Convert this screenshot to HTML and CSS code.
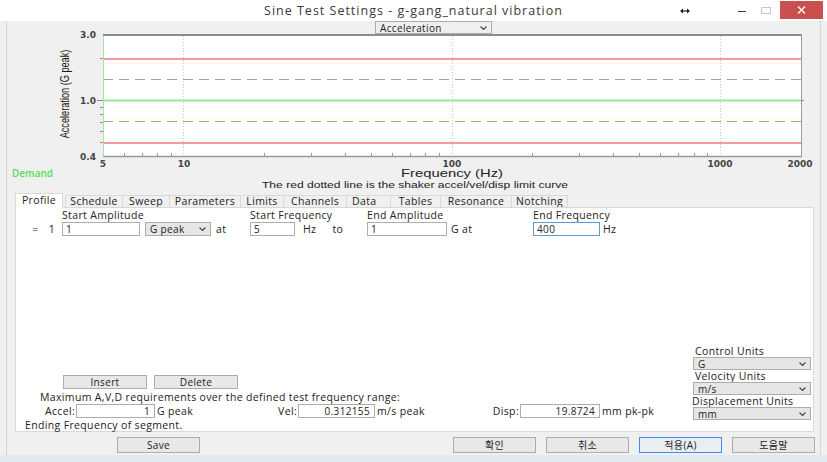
FILE: index.html
```html
<!DOCTYPE html>
<html lang="en">
<head>
<meta charset="utf-8">
<title>Sine Test Settings</title>
<link rel="stylesheet" href="styles.css">
</head>
<body>
<div class="titlebar">
  <div class="tb-side"></div>
  <div class="tb-title">Sine Test Settings - g-gang_natural vibration</div>
  <div class="tb-side tb-controls">
    <svg class="tb-resize" width="10" height="6" viewBox="0 0 10 6"><path d="M0 3 L3 0.5 V5.5 Z M10 3 L7 0.5 V5.5 Z" fill="#222"/><path d="M2 3H8" stroke="#222" stroke-width="1.2"/></svg>
    <span class="tb-min"></span>
    <span class="tb-max"></span>
    <span class="tb-close"><svg width="9" height="8" viewBox="0 0 9 8"><path d="M1 0.5 L8 7.5 M8 0.5 L1 7.5" stroke="#fff" stroke-width="1.4"/></svg></span>
  </div>
</div>

<div class="frame">
  <div class="chart-top">
    <div class="combo combo-accel"><span>Acceleration</span><svg width="7" height="4" viewBox="0 0 7 4"><path d="M0.5 0.5 L3.5 3.5 L6.5 0.5" fill="none" stroke="#444" stroke-width="1.1"/></svg></div>
  </div>
  <svg class="plot" width="813" height="156" viewBox="7 34 813 156">
    <rect x="103" y="34" width="698" height="122" fill="#fff"/>
    <line x1="103" y1="63.5" x2="801" y2="63.5" stroke="#fbfbe6"/>
    <line x1="103" y1="118.5" x2="801" y2="118.5" stroke="#fbfbe6"/>
    <line x1="103" y1="138.5" x2="801" y2="138.5" stroke="#eefbfb"/>
    <rect class="limit" x="103" y="58" width="698" height="2"/>
    <line x1="103" y1="79.5" x2="801" y2="79.5" stroke="#a6a68a" stroke-dasharray="10 6"/>
    <rect class="demand-line" x="103" y="99.5" width="698" height="2"/>
    <line x1="103" y1="121.5" x2="801" y2="121.5" stroke="#a6a68a" stroke-dasharray="10 6"/>
    <rect class="limit" x="103" y="142" width="698" height="2"/>
    <path d="M183.5 36V156M452.5 36V156M720.5 36V156" stroke="#c4c4c4" stroke-dasharray="1 2"/>
    <path d="M124.5 156v-3M142.5 156v-3M157.5 156v-3M171.5 156v-3M264.5 156v-3M311.5 156v-3M345.5 156v-3M371.5 156v-3M392.5 156v-3M410.5 156v-3M425.5 156v-3M439.5 156v-3M532.5 156v-3M579.5 156v-3M613.5 156v-3M639.5 156v-3M660.5 156v-3M678.5 156v-3M694.5 156v-3M707.5 156v-3" stroke="#999"/>
    <path d="M100 142.5h3M100 131.5h3M100 122.5h3M100 114.5h3M100 107.5h3M100 58.5h3M97 100.5h6M801 100.5h3" stroke="#888"/>
    <line x1="103" y1="35" x2="802" y2="35" stroke="#8e8e8e" stroke-width="2"/>
    <line x1="801.5" y1="34" x2="801.5" y2="157" stroke="#999"/>
    <line x1="103" y1="156.5" x2="802" y2="156.5" stroke="#999" stroke-width="1.4"/>
    <line x1="103.5" y1="36" x2="103.5" y2="156" stroke="#a9e2a9"/>
    <g class="axis-num">
      <text x="96" y="37.5" text-anchor="end">3.0</text>
      <text x="96" y="104" text-anchor="end">1.0</text>
      <text x="96" y="159.5" text-anchor="end">0.4</text>
      <text x="103" y="166.5" text-anchor="middle">5</text>
      <text x="184" y="166.5" text-anchor="middle">10</text>
      <text x="452" y="166.5" text-anchor="middle">100</text>
      <text x="720" y="166.5" text-anchor="middle">1000</text>
      <text x="800" y="166.5" text-anchor="middle">2000</text>
    </g>
    <text class="axis-title-y" transform="translate(69 94) rotate(-90) scale(0.68 1)" text-anchor="middle">Acceleration (G peak)</text>
    <text class="axis-title-x" x="401" y="177" textLength="102" lengthAdjust="spacingAndGlyphs">Frequency (Hz)</text>
    <text class="demand" x="12" y="176.5">Demand</text>
    <text class="subtitle" x="262" y="188" textLength="306" lengthAdjust="spacingAndGlyphs">The red dotted line is the shaker accel/vel/disp limit curve</text>
  </svg>

  <div class="tabs">
    <div class="tab tab-active">Profile</div>
    <div class="tab tab-schedule">Schedule</div>
    <div class="tab tab-sweep">Sweep</div>
    <div class="tab tab-parameters">Parameters</div>
    <div class="tab tab-limits">Limits</div>
    <div class="tab tab-channels">Channels</div>
    <div class="tab tab-data">Data</div>
    <div class="tab tab-tables">Tables</div>
    <div class="tab tab-resonance">Resonance</div>
    <div class="tab tab-notching">Notching</div>
  </div>

  <div class="panel">
    <div class="profile">
      <div></div>
      <div class="lbl">Start Amplitude</div>
      <div class="lbl">Start Frequency</div>
      <div class="lbl">End Amplitude</div>
      <div class="lbl">End Frequency</div>

      <div class="seg-no"><span class="eq">=</span>1</div>
      <div class="ctl">
        <div class="field in-amp">1</div>
        <div class="combo combo-gpeak"><span>G peak</span><svg width="7" height="4" viewBox="0 0 7 4"><path d="M0.5 0.5 L3.5 3.5 L6.5 0.5" fill="none" stroke="#444" stroke-width="1.1"/></svg></div>
        <span class="after-combo">at</span>
      </div>
      <div class="ctl">
        <div class="field in-sfreq">5</div>
        <span class="unit-hz">Hz</span>
        <span class="word-to">to</span>
      </div>
      <div class="ctl">
        <div class="field in-eamp">1</div>
        <span class="unit-gat">G at</span>
      </div>
      <div class="ctl">
        <div class="field in-efreq">400</div>
        <span class="unit-hz2">Hz</span>
      </div>
    </div>

    <div class="panel-bottom">
      <div class="pb-left">
        <div class="btn-row">
          <div class="btn btn-small">Insert</div>
          <div class="btn btn-small">Delete</div>
        </div>
        <div class="avd-title">Maximum A,V,D requirements over the defined test frequency range:</div>
        <div class="avd-row">
          <span class="avd-lbl">Accel:</span>
          <div class="field num">1</div>
          <span class="avd-unit">G peak</span>
          <span class="avd-lbl">Vel:</span>
          <div class="field num">0.312155</div>
          <span class="avd-unit">m/s peak</span>
          <span class="avd-lbl">Disp:</span>
          <div class="field num">19.8724</div>
          <span class="avd-unit">mm pk-pk</span>
        </div>
        <div class="status">Ending Frequency of segment.</div>
      </div>
      <div class="units">
        <div class="unit-lbl">Control Units</div>
        <div class="combo combo-unit"><span>G</span><svg width="7" height="4" viewBox="0 0 7 4"><path d="M0.5 0.5 L3.5 3.5 L6.5 0.5" fill="none" stroke="#444" stroke-width="1.1"/></svg></div>
        <div class="unit-lbl">Velocity Units</div>
        <div class="combo combo-unit"><span>m/s</span><svg width="7" height="4" viewBox="0 0 7 4"><path d="M0.5 0.5 L3.5 3.5 L6.5 0.5" fill="none" stroke="#444" stroke-width="1.1"/></svg></div>
        <div class="unit-lbl unit-lbl-wide">Displacement Units</div>
        <div class="combo combo-unit"><span>mm</span><svg width="7" height="4" viewBox="0 0 7 4"><path d="M0.5 0.5 L3.5 3.5 L6.5 0.5" fill="none" stroke="#444" stroke-width="1.1"/></svg></div>
      </div>
    </div>
  </div>

  <div class="footer">
    <div class="btn">Save</div>
    <div class="footer-right">
      <div class="btn">확인</div>
      <div class="btn">취소</div>
      <div class="btn btn-default">적용(A)</div>
      <div class="btn">도움말</div>
    </div>
  </div>
</div>
<div class="bottom-strip"></div>
</body>
</html>
```

FILE: styles.css
```css
* { box-sizing: border-box; margin: 0; padding: 0; }
html, body { width: 827px; height: 462px; overflow: hidden; }
body {
  background: #f0f0f0;
  font-family: "Open Sans", "Noto Sans CJK KR", sans-serif;
  font-size: 10.5px;
  letter-spacing: 0.35px;
  color: #222;
  display: flex;
  flex-direction: column;
}

/* title bar */
.titlebar {
  flex: none;
  height: 21px;
  background: #fff;
  display: grid;
  grid-template-columns: 1fr auto 1fr;
  align-items: center;
}
.tb-title { font-size: 12.5px; letter-spacing: 1px; color: #3a3a3a; line-height: 21px; white-space: nowrap; }
.tb-controls { display: flex; justify-content: flex-end; align-items: center; height: 21px; padding-right: 4px; }
.tb-resize { margin-right: 48px; }
.tb-min { width: 8px; height: 1px; background: #333; margin-right: 15px; margin-top: 2px; }
.tb-max { width: 10px; height: 7px; border: 1px solid #c8c8c8; margin-right: 9px; }
.tb-close {
  width: 43px; height: 18px; background: #c9504e;
  display: flex; align-items: center; justify-content: center;
  align-self: flex-start; margin-top: 1px;
}

/* window body */
.frame {
  flex: 1;
  margin: 0 6px;
  border-left: 1px solid #d4d4d4;
  border-right: 1px solid #d4d4d4;
  display: flex;
  flex-direction: column;
}
.chart-top { height: 13px; display: flex; }
.plot { display: block; flex: none; overflow: visible; letter-spacing: 0; }
.limit { fill: #f39a9a; }
.demand-line { fill: #9be89b; }
.axis-num { font-family: "DejaVu Sans", sans-serif; font-weight: bold; font-size: 9px; fill: #444; }
.axis-title-y { font-family: "Liberation Sans", sans-serif; font-size: 13.5px; fill: #1a1a1a; }
.axis-title-x { font-family: "Liberation Sans", sans-serif; font-size: 11.5px; fill: #222; }
.demand { font-family: "Open Sans", sans-serif; font-size: 10px; font-weight: 600; fill: #55dd55; }
.subtitle { font-family: "Liberation Sans", sans-serif; font-size: 9.5px; fill: #222; }

/* combos and fields */
.combo {
  display: flex; align-items: center; justify-content: space-between;
  height: 14px; border: 1px solid #acacac; background: #e6e6e6;
  padding: 0 4px; font-size: 10px; line-height: 12px; white-space: nowrap;
}
.combo-accel { margin-left: 368px; width: 117px; height: 13px; background: #efefef; }
.combo-gpeak { width: 66px; margin-left: 5px; }
.combo-unit { width: 118px; height: 13px; }
.field {
  height: 14px; border: 1px solid #abadb3; background: #fff;
  padding: 0 3px; line-height: 12px; font-size: 10px; white-space: nowrap;
}
.field.num { text-align: right; padding-right: 4px; }

/* tabs */
.tabs {
  display: flex; align-items: flex-end; height: 15px;
  margin-top: 3px; margin-bottom: -1px; padding-left: 8px;
}
.tab {
  height: 12px; margin-bottom: 1px;
  margin-left: -1px;
  border: 1px solid #d9d9d9; border-bottom: none;
  background: #f0f0f0;
  line-height: 11px; white-space: nowrap; text-align: center;
}
.tab-active {
  position: relative;
  width: 48px;
  height: 15px; margin-bottom: 0; margin-left: 0; margin-right: 3px;
  padding-top: 1px;
  background: #fff;
}
.tab-schedule { width: 58px; }
.tab-sweep { width: 48px; }
.tab-parameters { width: 72px; }
.tab-limits { width: 44px; }
.tab-channels { width: 64px; }
.tab-data { width: 45px; text-align: left; padding-left: 5px; }
.tab-tables { width: 51px; }
.tab-resonance { width: 72px; }
.tab-notching { width: 57px; }

/* panel */
.panel {
  flex: none;
  height: 225px;
  margin: 0 6px 0 8px;
  background: #fff;
  border: 1px solid #d9d9d9;
  display: flex;
  flex-direction: column;
}
.profile {
  display: grid;
  grid-template-columns: 46px 188px 117px 166px 1fr;
  grid-template-rows: 12px 14px;
  row-gap: 1px;
  padding-top: 1px;
}
.lbl { line-height: 12px; white-space: nowrap; }
.seg-no { display: flex; justify-content: flex-end; align-items: center; padding-right: 7px; line-height: 14px; }
.eq { margin-right: 10px; }
.ctl { display: flex; align-items: center; height: 14px; white-space: nowrap; }
.in-amp { width: 78px; }
.after-combo { margin-left: 5px; }
.in-sfreq { width: 45px; }
.unit-hz { margin-left: 8px; }
.word-to { margin-left: 16px; }
.in-eamp { width: 80px; }
.unit-gat { margin-left: 4px; }
.in-efreq { width: 67px; border-color: #5b9bd5; }
.unit-hz2 { margin-left: 3px; }

.panel-bottom { margin-top: auto; display: flex; justify-content: space-between; align-items: flex-end; }
.pb-left { display: flex; flex-direction: column; }
.btn-row { display: flex; gap: 7px; padding-left: 47px; }
.btn {
  width: 83px; height: 16px;
  border: 1px solid #adadad; background: #e8e8e8;
  font-size: 10px; line-height: 14px; text-align: center; color: #222;
}
.btn-small { width: 84px; height: 14px; line-height: 12px; }
.avd-title { margin-top: 2px; line-height: 12px; padding-left: 24px; white-space: nowrap; }
.avd-row {
  margin-top: 1px; height: 14px;
  display: grid;
  grid-template-columns: 60px 79px 110px 33px 77px 110px 35px 80px 1fr;
  align-items: center; white-space: nowrap;
}
.avd-lbl { text-align: right; padding-right: 1px; line-height: 14px; }
.avd-unit { padding-left: 2px; line-height: 14px; }
.status { margin-top: 1px; line-height: 12px; padding-left: 9px; }

.units { width: 120px; padding-right: 2px; padding-bottom: 11px; display: flex; flex-direction: column; }
.unit-lbl { line-height: 12px; padding-left: 2px; white-space: nowrap; }
.unit-lbl-wide { padding-left: 0; margin-left: -1px; }

/* footer buttons */
.footer { display: flex; justify-content: space-between; margin-top: 5px; padding: 0 5px 0 110px; }
.footer-right { display: flex; gap: 10px; }
.btn-default { border-color: #3d8ee0; background: #e9eef3; }

.bottom-strip { flex: none; height: 7px; background: #e0e8f0; }
```
